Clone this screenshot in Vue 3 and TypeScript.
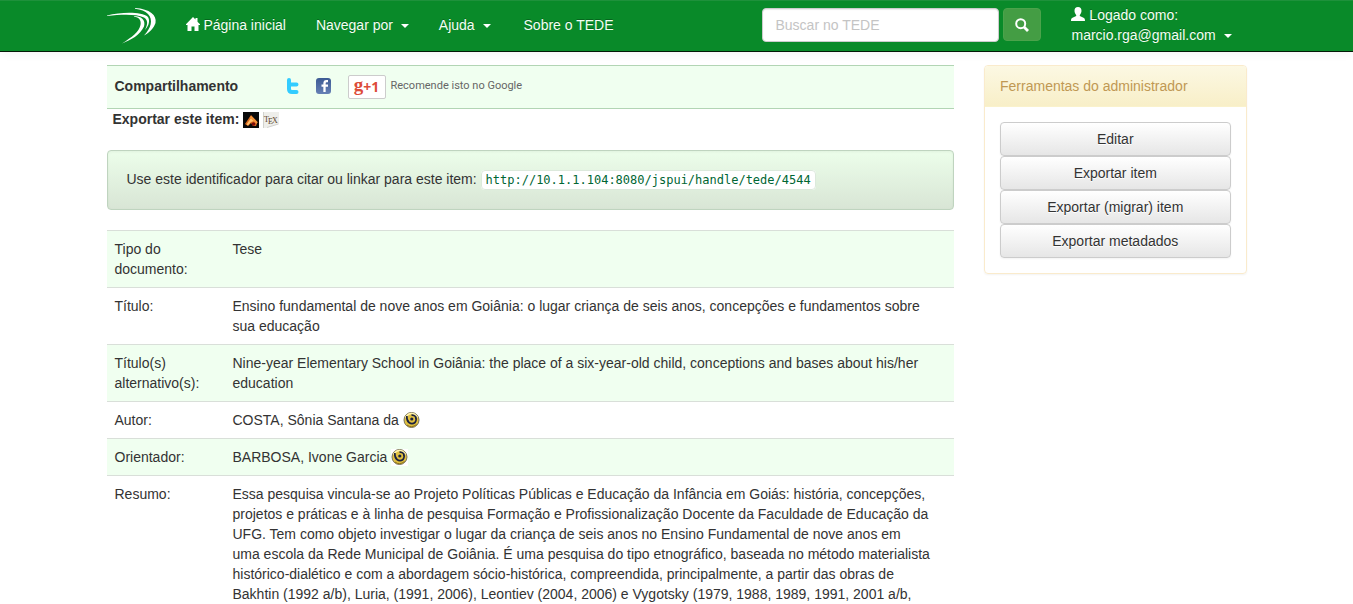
<script setup lang="ts">
import { ref } from 'vue'

interface MetaRow {
  label: string
  value: string
  lattes?: boolean
}

const query = ref('')
const handle = 'http://10.1.1.104:8080/jspui/handle/tede/4544'
const tools: string[] = ['Editar', 'Exportar item', 'Exportar (migrar) item', 'Exportar metadados']

const rows: MetaRow[] = [
  { label: 'Tipo do documento:', value: 'Tese' },
  {
    label: 'Título:',
    value: 'Ensino fundamental de nove anos em Goiânia: o lugar criança de seis anos, concepções e fundamentos sobre sua educação',
  },
  {
    label: 'Título(s) alternativo(s):',
    value: 'Nine-year Elementary School in Goiânia: the place of a six-year-old child, conceptions and bases about his/her education',
  },
  { label: 'Autor:', value: 'COSTA, Sônia Santana da', lattes: true },
  { label: 'Orientador:', value: 'BARBOSA, Ivone Garcia', lattes: true },
  {
    label: 'Resumo:',
    value:
      'Essa pesquisa vincula-se ao Projeto Políticas Públicas e Educação da Infância em Goiás: história, concepções, projetos e práticas e à linha de pesquisa Formação e Profissionalização Docente da Faculdade de Educação da UFG. Tem como objeto investigar o lugar da criança de seis anos no Ensino Fundamental de nove anos em\numa escola da Rede Municipal de Goiânia. É uma pesquisa do tipo etnográfico, baseada no método materialista\nhistórico-dialético e com a abordagem sócio-histórica, compreendida, principalmente, a partir das obras de\nBakhtin (1992 a/b), Luria, (1991, 2006), Leontiev (2004, 2006) e Vygotsky (1979, 1988, 1989, 1991, 2001 a/b,',
  },
]
</script>

<template>
  <div class="page">
    <header class="navbar">
      <div class="container bar">
        <a class="brand" href="#" aria-label="TEDE">
          <svg width="50" height="36" viewBox="0 0 50 36" fill="#fff">
            <path d="M0 7.500C15 4 34 3.500 41 9C44 14 40 20 38 22C41 16 41 12 37 9.500C29 6 15 6.500 0 8Z" />
            <path d="M28 0C43 1 50 7 48.500 15C47 20 42 25 37 27.500C44 20 46.500 12 41 6C38 3 34 1.500 28 .800Z" />
            <path d="M27 8C34 8 39 12 37 18.500C33 27 24 32 15 35.500C25 29 32 24 33.500 17C34.500 12 32 9.500 27 8.500Z" />
          </svg>
        </a>
        <nav class="links">
          <a href="#">
            <svg class="glyph" width="14" height="14" viewBox="0 0 14 14" fill="#fff">
              <path d="M7 0L9.500 2.600V1H11.500V4.700L14 7.300V8H12.500V14H8.500V9.500H5.500V14H1.500V8H0V7.300Z" />
            </svg>
            Página inicial
          </a>
          <a href="#">Navegar por <span class="caret"></span></a>
          <a href="#">Ajuda <span class="caret"></span></a>
          <a href="#" class="about">Sobre o TEDE</a>
        </nav>
        <form class="search" @submit.prevent>
          <input v-model="query" type="text" placeholder="Buscar no TEDE" aria-label="Buscar no TEDE" />
          <button type="submit" aria-label="Buscar">
            <svg width="14" height="14" viewBox="0 0 14 14" fill="none" stroke="#fff">
              <circle cx="5.700" cy="5.700" r="4.500" stroke-width="2" />
              <path d="M9 9L13 13" stroke-width="2.800" />
            </svg>
          </button>
        </form>
        <a class="user" href="#">
          <svg class="glyph" width="14" height="14" viewBox="0 0 14 14" fill="#fff">
            <path d="M7 0C9.300 0 10.600 1.500 10.500 4C10.400 5.800 9.600 7.100 8.800 7.900V9L12.500 10.700C13.600 11.200 14 12 14 14H0C0 12 .4 11.200 1.500 10.700L5.200 9V7.900C4.400 7.100 3.600 5.800 3.500 4C3.400 1.500 4.700 0 7 0Z" />
          </svg>
          Logado como:<br />marcio.rga@gmail.com <span class="caret"></span>
        </a>
      </div>
    </header>

    <div class="container columns">
      <main>
        <div class="share">
          <strong>Compartilhamento</strong>
          <a href="#" aria-label="Twitter" class="twitter">
            <svg width="12" height="16" viewBox="0 0 12 16" fill="none" stroke="#33ccff" stroke-width="4" stroke-linecap="round" stroke-linejoin="round">
              <path d="M2 2V11Q2 14 5 14H9.500M2 6.500H9.500" />
            </svg>
          </a>
          <a href="#" aria-label="Facebook" class="facebook">
            <svg width="16" height="16" viewBox="0 0 16 16">
              <defs>
                <linearGradient id="fb" x1="0" y1="0" x2="0" y2="1">
                  <stop offset="0" stop-color="#3d5b94" />
                  <stop offset="1" stop-color="#6680b5" />
                </linearGradient>
              </defs>
              <rect width="15" height="16" rx="3" fill="url(#fb)" />
              <path d="M12 3.200H10.500Q8.500 3.200 8.500 5.500V14M5.500 7.700H12" fill="none" stroke="#fff" stroke-width="2.300" />
            </svg>
          </a>
          <button type="button" class="plus" aria-label="+1"><span class="g">g</span><span>+1</span></button>
          <span class="recommend">Recomende isto no Google</span>
        </div>
        <div class="export">
          <strong>Exportar este item:</strong>
          <a href="#" aria-label="EndNote">
            <svg width="16" height="16" viewBox="0 0 16 16">
              <rect width="16" height="16" fill="#090909" />
              <path d="M2 12L8 3L14.500 10L13 14H10L8 11L5 14Z" fill="#d9691e" />
              <path d="M3.500 12.500L8 6L11 9L8 10L5 13.500Z" fill="#ffc06d" />
              <path d="M7.500 4.500L14 11" stroke="#f5953b" stroke-width="2" />
              <circle cx="10.500" cy="12" r="1.800" fill="#7c0b0b" />
            </svg>
          </a>
          <a href="#" aria-label="BibTeX">
            <svg width="16" height="16" viewBox="0 0 16 16">
              <rect width="16" height="16" fill="#eeeeea" />
              <path d="M3 16L16 12V16Z" fill="#fff" />
              <path d="M.5 0V16M4 15.500L15.500 12" stroke="#d2d2ce" fill="none" />
              <g class="tex" fill="#5a4328">
                <text x="1" y="10">T</text>
                <text x="5" y="12">E</text>
                <text x="9" y="11">X</text>
              </g>
            </svg>
          </a>
        </div>
        <div class="well">Use este identificador para citar ou linkar para este item: <code>{{ handle }}</code></div>
        <table class="meta">
          <tbody>
            <tr v-for="row in rows" :key="row.label">
              <th scope="row">{{ row.label }}</th>
              <td>
                <span class="value">{{ row.value }}</span>
                <a v-if="row.lattes" href="#" class="lattes" aria-label="Currículo Lattes">
                  <svg width="17" height="17" viewBox="0 0 17 17">
                    <rect width="17" height="17" fill="#fff" />
                    <circle cx="8.500" cy="8" r="7.500" fill="#e0c040" stroke="#77725e" />
                    <path d="M2.500 5.500Q5 1.500 8.500 1.500Q12 1.500 14.500 5.500" fill="none" stroke="#fff3b0" stroke-width="1.500" />
                    <path d="M3.800 4Q3.500 8.500 6 10.500Q9 12.800 12 10.500Q14 7.500 12.500 4.500Q11 3 8.500 3.200" fill="none" stroke="#1b2140" stroke-width="1.700" />
                    <circle cx="8.800" cy="7" r="1.600" fill="#1b2140" />
                    <path d="M4 13Q8.500 16.500 13.500 12.500" fill="none" stroke="#8c711b" />
                  </svg>
                </a>
              </td>
            </tr>
          </tbody>
        </table>
      </main>
      <aside class="panel">
        <h2>Ferramentas do administrador</h2>
        <div class="tools">
          <button v-for="tool in tools" :key="tool" type="button">{{ tool }}</button>
        </div>
      </aside>
    </div>
  </div>
</template>

<style>
body {
  margin: 0;
  background: #fff;
}
</style>

<style scoped>
* {
  box-sizing: border-box;
}
.page {
  font: 14px/20px "Liberation Sans", Arial, sans-serif;
  color: #333;
}
.page a {
  color: inherit;
  text-decoration: none;
}
.container {
  max-width: 1170px;
  margin: 0 auto;
  padding: 0 15px;
}
.navbar {
  background: #098a29;
  border-top: 1px solid #1e913b;
  border-bottom: 1px solid #041a08;
  box-shadow: 0 1px 10px rgba(0, 0, 0, 0.06);
  color: #f3fff3;
  text-shadow: 0 -1px 0 rgba(0, 0, 0, 0.25);
}
.bar {
  display: flex;
  align-items: flex-start;
  height: 50px;
}
.brand {
  padding-top: 7px;
  width: 64px;
}
.brand svg {
  display: block;
}
.links {
  display: flex;
}
.links a {
  padding: 14px 15px;
  white-space: nowrap;
}
.links .about {
  margin-left: 3px;
}
.glyph {
  vertical-align: -1px;
}
.caret {
  display: inline-block;
  margin-left: 4px;
  vertical-align: middle;
  border-top: 4px solid #fff;
  border-left: 4px solid transparent;
  border-right: 4px solid transparent;
}
.search {
  display: flex;
  gap: 4px;
  margin: 7px 30px 0 auto;
}
.search input {
  width: 237px;
  height: 34px;
  padding: 6px 12px;
  border: 1px solid #ccc;
  border-radius: 4px;
  font: inherit;
  color: #555;
  background: #fff;
  box-shadow: inset 0 1px 1px rgba(0, 0, 0, 0.08);
}
.search input::placeholder {
  color: #c4c4c4;
}
.search button {
  width: 38px;
  height: 33px;
  display: grid;
  place-items: center;
  padding: 0;
  border: 1px solid #4ba34b;
  border-radius: 4px;
  background: #449d44;
}
.user {
  padding: 4px 15px 0 0;
  white-space: nowrap;
}
.columns {
  display: grid;
  grid-template-columns: minmax(0, 3.229fr) minmax(0, 1fr);
  gap: 30px;
  align-items: start;
  padding-top: 13px;
}
.share {
  display: flex;
  align-items: center;
  height: 44px;
  padding: 0 8px 2px;
  background: #f0fff0;
  border-top: 1px solid #b2d5b4;
  border-bottom: 1px solid #b2d5b4;
}
.share svg {
  display: block;
}
.share strong {
  width: 172px;
}
.twitter {
  width: 29px;
}
.facebook {
  width: 32px;
}
.plus {
  display: flex;
  align-items: center;
  justify-content: center;
  width: 38px;
  height: 24px;
  margin: 2px 5px 0 0;
  padding: 0;
  border: 1px solid #ccc;
  border-radius: 2px;
  background: #fff;
  color: #dd4b39;
  font: bold 14px/20px "Open Sans", sans-serif;
}
.plus .g {
  font: bold 19px/20px "Liberation Serif", serif;
  padding-bottom: 4px;
}
.recommend {
  font: 11px/20px Roboto, sans-serif;
  color: #666;
}
.export {
  display: flex;
  gap: 4px;
  padding-left: 6px;
}
.export svg {
  display: block;
  margin-top: 3px;
}
.tex {
  font: 8px "Liberation Serif", serif;
}
.well {
  margin: 21px 0 20px;
  padding: 18px 19px 20px;
  border: 1px solid #bfd4bf;
  border-radius: 4px;
  background: linear-gradient(#ecfeea, #d8e5d5);
  box-shadow: inset 0 1px 3px rgba(0, 0, 0, 0.05);
}
code {
  padding: 2px 4px;
  border: 1px solid #dce9dc;
  border-radius: 4px;
  background: #fff;
  color: #006633;
  font: 12px/16px "DejaVu Sans Mono", monospace;
}
.meta {
  width: 100%;
  border-collapse: collapse;
  table-layout: fixed;
}
.meta th,
.meta td {
  padding: 8px;
  border-top: 1px solid #d9dfd9;
  text-align: left;
  vertical-align: top;
  font-weight: normal;
}
.meta th {
  width: 118px;
}
.meta tr:nth-child(odd) {
  background: #f0fff0;
}
.value {
  white-space: pre-line;
}
.lattes {
  margin-left: 4px;
}
.lattes svg {
  vertical-align: -4px;
}
.panel {
  border: 1px solid #faebcc;
  border-radius: 4px;
  box-shadow: 0 1px 2px rgba(0, 0, 0, 0.05);
}
.panel h2 {
  margin: 0;
  padding: 10px 15px;
  border-bottom: 1px solid #faf2cc;
  border-radius: 3px 3px 0 0;
  background: linear-gradient(#fcf8e3, #f8efc8);
  color: #c09853;
  font: inherit;
}
.tools {
  display: grid;
  padding: 15px;
}
.tools button {
  height: 34px;
  padding: 6px 12px;
  border: 1px solid #ccc;
  border-radius: 4px;
  background: linear-gradient(#fff, #e6e6e6);
  box-shadow: 0 1px 2px rgba(0, 0, 0, 0.05);
  color: #333;
  font: inherit;
  text-shadow: 0 1px 0 #fff;
}
</style>
